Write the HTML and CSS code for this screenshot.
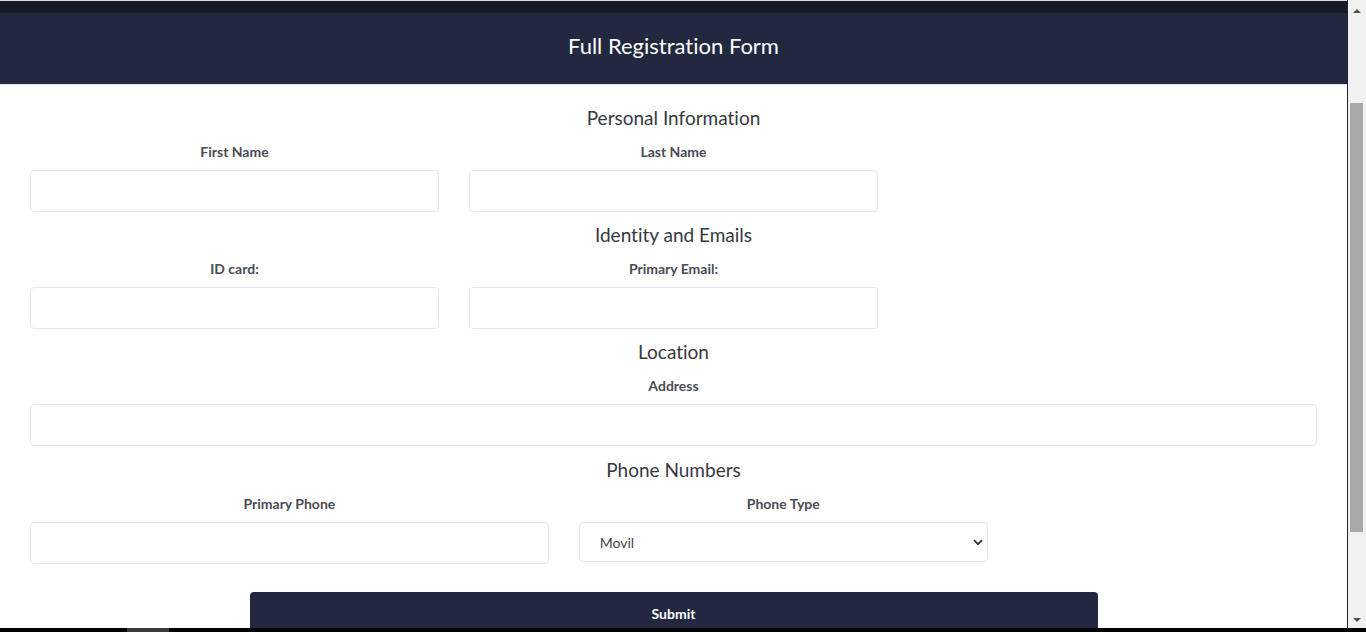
FILE: index.html
```html
<!DOCTYPE html>
<html lang="en">
<head>
<meta charset="utf-8">
<title>Full Registration Form</title>
<link rel="stylesheet" href="styles.css">
</head>
<body>
<div class="window">
  <div class="page">
    <div class="top-line"></div>
    <div class="top-bar"></div>
    <header class="header">
      <h1 class="title">Full Registration Form</h1>
    </header>
    <form class="form">
      <section class="group">
        <h2 class="group-title">Personal Information</h2>
        <div class="grid">
          <div class="field span-4">
            <label class="label" for="fn">First Name</label>
            <input class="input" id="fn" type="text">
          </div>
          <div class="field span-4">
            <label class="label" for="ln">Last Name</label>
            <input class="input" id="ln" type="text">
          </div>
        </div>
      </section>
      <section class="group">
        <h2 class="group-title">Identity and Emails</h2>
        <div class="grid">
          <div class="field span-4">
            <label class="label" for="id">ID card:</label>
            <input class="input" id="id" type="text">
          </div>
          <div class="field span-4">
            <label class="label" for="em">Primary Email:</label>
            <input class="input" id="em" type="email">
          </div>
        </div>
      </section>
      <section class="group">
        <h2 class="group-title">Location</h2>
        <div class="grid">
          <div class="field span-12">
            <label class="label" for="ad">Address</label>
            <input class="input" id="ad" type="text">
          </div>
        </div>
      </section>
      <section class="group group-last">
        <h2 class="group-title">Phone Numbers</h2>
        <div class="grid">
          <div class="field span-5">
            <label class="label" for="ph">Primary Phone</label>
            <input class="input" id="ph" type="tel">
          </div>
          <div class="field span-4">
            <label class="label" for="pt">Phone Type</label>
            <div class="select-wrap">
              <select class="select" id="pt">
                <option>Movil</option>
                <option>Casa</option>
                <option>Trabajo</option>
              </select>
              <svg class="chevron" width="10" height="7" viewBox="0 0 10 7"><path d="M1 1.2 L5 5.2 L9 1.2" fill="none" stroke="#333" stroke-width="1.8"/></svg>
            </div>
          </div>
        </div>
      </section>
      <div class="grid actions">
        <button class="submit" type="button">Submit</button>
      </div>
    </form>
  </div>
  <div class="scrollbar">
    <div class="arrow arrow-up"></div>
    <div class="track"><div class="thumb"></div></div>
    <div class="arrow arrow-down"></div>
  </div>
</div>
<div class="taskbar"><div class="taskbar-item"></div></div>
</body>
</html>
```
FILE: styles.css
```css
html, body {
  margin: 0;
  padding: 0;
  height: 632px;
  overflow: hidden;
  background: #ffffff;
  font-family: Lato, "Open Sans", Arial, sans-serif;
  font-variant-ligatures: none;
}

.window {
  display: flex;
  height: 628px;
  overflow: hidden;
}

.page {
  width: 1347px;
  flex: none;
  overflow: hidden;
}

.top-line {
  height: 1px;
  background: #dcdde2;
}

.top-bar {
  height: 12px;
  background: #161a27;
}

.header {
  height: 71px;
  background: #21283f;
  border-bottom: 1px solid #e7e8ee;
  display: flex;
  align-items: center;
  justify-content: center;
}

.title {
  margin: 0;
  color: #ffffff;
  font-weight: 400;
  font-size: 22px;
  line-height: 26px;
  padding-bottom: 5px;
}

.form {
  padding: 21px 30px 0 30px;
}

.group {
  margin-bottom: 11px;
}

.group-last {
  padding-top: 1px;
}

.group-title {
  margin: 0 0 12px 0;
  text-align: center;
  font-weight: 400;
  font-size: 19px;
  line-height: 23px;
  padding-bottom: 1px;
  color: #363842;
}

.grid {
  display: grid;
  grid-template-columns: repeat(12, 1fr);
  column-gap: 30px;
}

.span-4 { grid-column: span 4; }
.span-5 { grid-column: span 5; }
.span-12 { grid-column: span 12; }

.field {
  display: flex;
  flex-direction: column;
}

.label {
  display: block;
  text-align: center;
  font-weight: 700;
  font-size: 14px;
  line-height: 20px;
  color: #4a4b55;
  margin-bottom: 8px;
}

.input {
  box-sizing: border-box;
  height: 42px;
  width: 100%;
  border: 1px solid #e6e6ee;
  border-radius: 4px;
  background: #ffffff;
  font: inherit;
  padding: 0 20px;
  outline: none;
}

.select-wrap {
  position: relative;
}

.select {
  box-sizing: border-box;
  appearance: none;
  -webkit-appearance: none;
  width: 100%;
  height: 40px;
  border: 1px solid #e6e6ee;
  border-radius: 4px;
  background: #ffffff;
  font-family: Lato, Arial, sans-serif;
  font-size: 14px;
  color: #444444;
  padding: 0 20px;
  outline: none;
}

.chevron {
  position: absolute;
  right: 5px;
  top: 17px;
  pointer-events: none;
}

.actions {
  margin-top: 28px;
}

.submit {
  grid-column: 3 / span 8;
  height: 43px;
  border: none;
  border-radius: 4px;
  background: #21283f;
  color: #ffffff;
  font-family: Lato, Arial, sans-serif;
  font-weight: 700;
  font-size: 14px;
}

.scrollbar {
  width: 18px;
  flex: none;
  border-left: 1px solid #1e2232;
  background: #f1f1f1;
  display: flex;
  flex-direction: column;
}

.arrow {
  height: 17px;
  display: flex;
  align-items: center;
  justify-content: center;
}

.arrow-up {
  margin-top: 2px;
}

.arrow-up::before {
  content: "";
  border-left: 4px solid transparent;
  border-right: 4px solid transparent;
  border-bottom: 4px solid #505050;
}

.arrow-down::before {
  content: "";
  border-left: 4px solid transparent;
  border-right: 4px solid transparent;
  border-top: 4px solid #505050;
}

.track {
  flex: 1;
  padding: 84px 3px 0 2px;
}

.thumb {
  height: 429px;
  background: #a8a8a8;
}

.taskbar {
  height: 4px;
  background: #000000;
}

.taskbar-item {
  margin-left: 127px;
  width: 42px;
  height: 4px;
  background: #3a3a3c;
}
```
